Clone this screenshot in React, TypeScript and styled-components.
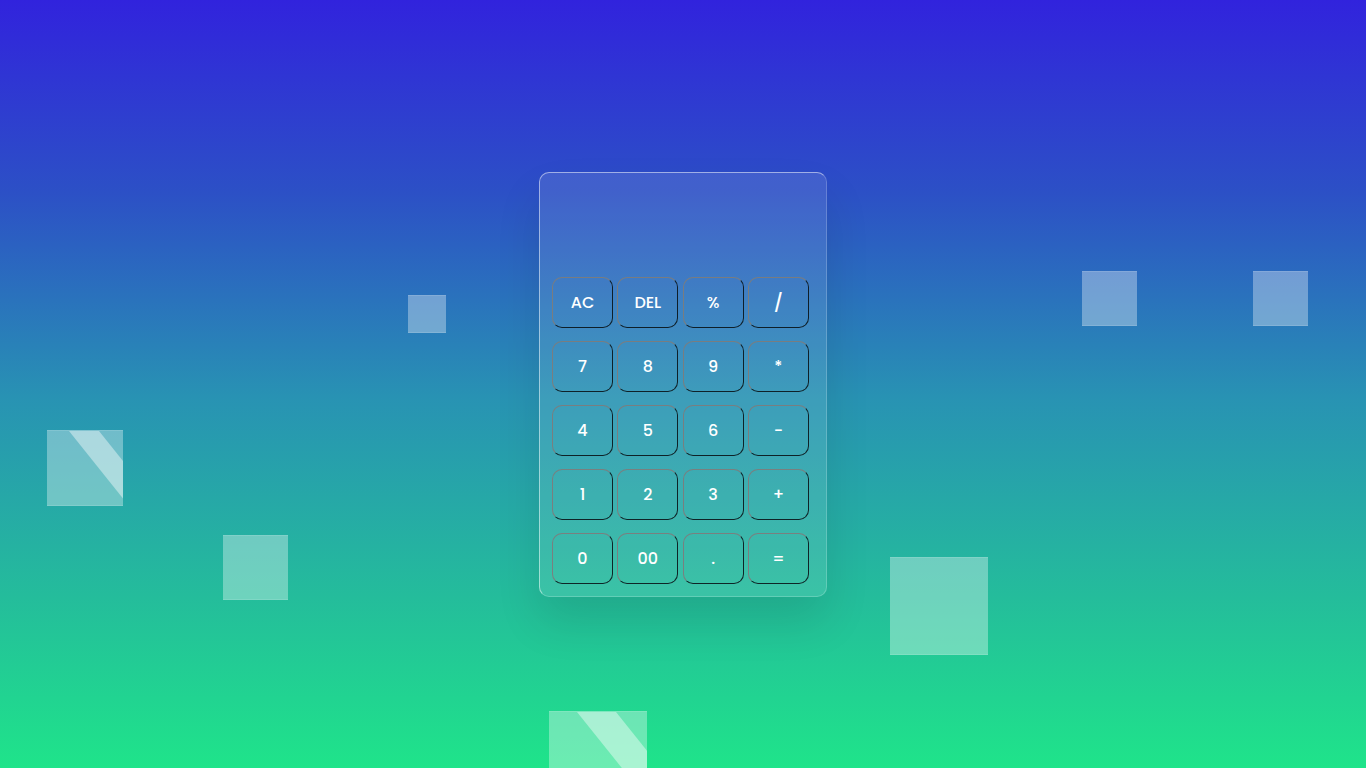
import React from "react";
import styled, { createGlobalStyle } from "styled-components";

const GlobalStyle = createGlobalStyle`
  * { box-sizing: border-box; margin: 0; padding: 0; }
  html, body { width: 100%; height: 100%; }
  body {
    margin: 0;
    font-family: "Poppins", "Inter", "Open Sans", sans-serif;
    overflow: hidden;
  }
`;

const Page = styled.section`
  position: relative;
  width: 100vw;
  height: 100vh;
  overflow: hidden;
  display: flex;
  align-items: center;
  justify-content: center;
  background: linear-gradient(to bottom, #3123dd 0%, #2c50c6 25%, #2893b3 52%, #24bd9b 78%, #1fe48a 100%);
`;

const Square = styled.div<{ $x: number; $y: number; $size: number; $shine?: boolean }>`
  position: absolute;
  left: ${(p) => p.$x}px;
  top: ${(p) => p.$y}px;
  width: ${(p) => p.$size}px;
  height: ${(p) => p.$size}px;
  background: rgba(255, 255, 255, 0.34);
  border-top: 1px solid rgba(255, 255, 255, 0.12);
  border-bottom: 1px solid rgba(255, 255, 255, 0.12);
  overflow: hidden;
  &::before {
    content: "";
    display: ${(p) => (p.$shine ? "block" : "none")};
    position: absolute;
    top: 0;
    left: 29%;
    width: 40%;
    height: 100%;
    background: rgba(255, 255, 255, 0.42);
    transform-origin: top left;
    transform: skewX(38.7deg);
  }
`;

const Calculator = styled.div`
  position: relative;
  z-index: 2;
  width: 288px;
  height: 425px;
  display: flex;
  flex-direction: column;
  padding: 0 0 12px 12px;
  background: rgba(255, 255, 255, 0.1);
  border-radius: 10px;
  border-top: 1px solid rgba(255, 255, 255, 0.5);
  border-left: 1px solid rgba(255, 255, 255, 0.5);
  border-right: 1px solid rgba(255, 255, 255, 0.2);
  border-bottom: 1px solid rgba(255, 255, 255, 0.2);
  box-shadow: 0 25px 45px rgba(0, 0, 0, 0.1);
`;

const Display = styled.div`
  height: 104px;
  flex-shrink: 0;
`;

const Keys = styled.div`
  display: grid;
  grid-template-columns: repeat(4, 61px);
  grid-auto-rows: 51px;
  column-gap: 4.3px;
  row-gap: 13px;
`;

const Key = styled.button<{ $big?: boolean }>`
  display: flex;
  align-items: center;
  justify-content: center;
  background: transparent;
  color: #fff;
  font-family: "Poppins", "Inter", "Open Sans", sans-serif;
  font-size: ${(p) => (p.$big ? "18px" : "16px")};
  font-weight: 500;
  border-radius: 10px;
  border-style: solid;
  border-width: 1px;
  border-top-color: rgba(125, 125, 125, 0.95);
  border-left-color: rgba(125, 125, 125, 0.95);
  border-right-color: rgba(10, 20, 25, 0.9);
  border-bottom-color: rgba(10, 20, 25, 0.9);
  cursor: pointer;
`;

const squares = [
  { x: 408, y: 295, size: 38 },
  { x: 1082, y: 271, size: 55 },
  { x: 1253, y: 271, size: 55 },
  { x: 47, y: 430, size: 76, shine: true },
  { x: 223, y: 535, size: 65 },
  { x: 890, y: 557, size: 98 },
  { x: 549, y: 711, size: 98, shine: true },
];

const keys = [
  "AC", "DEL", "%", "/",
  "7", "8", "9", "*",
  "4", "5", "6", "-",
  "1", "2", "3", "+",
  "0", "00", ".", "=",
];

export default function App() {
  return (
    <>
      <GlobalStyle />
      <Page>
        {squares.map((s, i) => (
          <Square key={i} $x={s.x} $y={s.y} $size={s.size} $shine={s.shine} />
        ))}
        <Calculator>
          <Display />
          <Keys>
            {keys.map((k) => (
              <Key key={k} $big={k === "/"}>
                {k}
              </Key>
            ))}
          </Keys>
        </Calculator>
      </Page>
    </>
  );
}
